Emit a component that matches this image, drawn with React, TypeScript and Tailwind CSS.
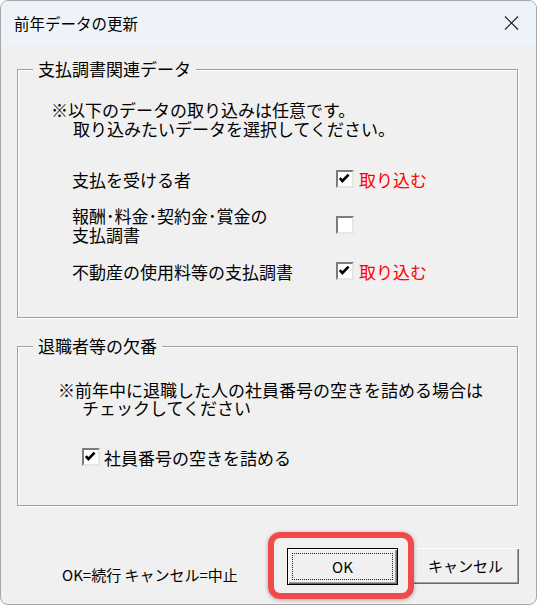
import type { ReactNode } from "react";

function CheckBox({ checked }: { checked?: boolean }) {
  return (
    <div className="h-[18px] w-[18px] shrink-0 border-2 border-t-[#7c7c7c] border-l-[#7c7c7c] border-r-[#e6e6e6] border-b-[#e6e6e6] bg-white">
      {checked ? (
        <svg viewBox="0 0 14 14" className="h-[14px] w-[14px]">
          <polyline points="1.8,6.2 4.4,9 10.6,2.6" fill="none" stroke="#000" strokeWidth="2.6" />
        </svg>
      ) : null}
    </div>
  );
}

function GroupBox({ title, className, children }: { title: string; className: string; children: ReactNode }) {
  return (
    <div
      className={`relative ml-[16px] w-[501px] border border-[#a0a0a0] shadow-[1px_1px_0_#fff,inset_1px_1px_0_#fff] ${className}`}
    >
      <span className="absolute left-[15px] top-[-11px] bg-[#f0f0f0] px-[5px] text-[17px] leading-[20px]">
        {title}
      </span>
      {children}
    </div>
  );
}

function Row({ label, checked, h = "h-[46px]" }: { label: ReactNode; checked?: boolean; h?: string }) {
  return (
    <div className={`flex items-center pl-[54px] ${h}`}>
      <div className="w-[264px] text-[17px] leading-[19px]">{label}</div>
      <CheckBox checked={checked} />
      {checked ? <span className="ml-[5px] text-[17px] leading-[19px] text-[#ff0000]">取り込む</span> : null}
    </div>
  );
}

export default function App() {
  return (
    <div className="h-[605px] w-[539px] bg-white font-['Noto_Sans_CJK_JP',sans-serif] text-black">
      <div className="flex h-[605px] w-[537px] flex-col overflow-hidden rounded-[8px] border border-[#a7a7a7] bg-[#f0f0f0]">
        <div className="flex h-[44px] shrink-0 items-center justify-between bg-[#eef3f9] pl-[13px] pr-[17px]">
          <span className="text-[15.5px] leading-[20px]">前年データの更新</span>
          <svg viewBox="0 0 15 14" className="h-[14px] w-[15px]">
            <path d="M1 0.5 L14 13.5 M14 0.5 L1 13.5" stroke="#1a1a1a" strokeWidth="1.1" />
          </svg>
        </div>

        <GroupBox title="支払調書関連データ" className="mt-[24px] h-[249px]">
          <div className="mt-[30px] text-[17px] leading-[19px]">
            <div className="pl-[33px]">※以下のデータの取り込みは任意です。</div>
            <div className="pl-[55px]">取り込みたいデータを選択してください。</div>
          </div>
          <div className="mt-[18px]">
            <Row label="支払を受ける者" checked />
            <Row
              label={
                <>
                  <div>報酬･料金･契約金･賞金の</div>
                  <div>支払調書</div>
                </>
              }
            />
            <Row label="不動産の使用料等の支払調書" checked />
          </div>
        </GroupBox>

        <GroupBox title="退職者等の欠番" className="mt-[28px] h-[160px]">
          <div className="mt-[34px] text-[17px] leading-[18px]">
            <div className="pl-[40px]">※前年中に退職した人の社員番号の空きを詰める場合は</div>
            <div className="pl-[64px]">チェックしてください</div>
          </div>
          <div className="mt-[28px] flex h-[24px] items-center pl-[64px]">
            <CheckBox checked />
            <span className="ml-[4px] text-[17px] leading-[19px]">社員番号の空きを詰める</span>
          </div>
        </GroupBox>

        <div className="mt-[42px] flex items-start">
          <div className="w-[286px] pl-[61px] pt-[17px] text-[15px] leading-[20px]">OK=続行 キャンセル=中止</div>
          <div className="relative">
            <div className="h-[37px] w-[111px] border border-black bg-[#f0f0f0] p-[4px] shadow-[inset_1px_1px_0_#fff,inset_-1px_-1px_0_#696969,inset_-2px_-2px_0_#a0a0a0]">
              <div className="flex h-full items-center justify-center border border-dotted border-[#222] text-[15px] leading-[20px]">
                OK
              </div>
            </div>
            <div className="absolute left-[-19px] top-[-16px] h-[67px] w-[146px] rounded-[12px] border-[6px] border-[#f24a4b] shadow-[0_1px_4px_rgba(0,0,0,0.3)]" />
          </div>
          <div className="ml-[14px] flex h-[36px] w-[107px] items-center justify-center bg-[#f0f0f0] text-[15px] leading-[20px] shadow-[inset_1px_1px_0_#fff,inset_-1px_-1px_0_#696969,inset_-2px_-2px_0_#a0a0a0]">
            キャンセル
          </div>
        </div>
      </div>
    </div>
  );
}
